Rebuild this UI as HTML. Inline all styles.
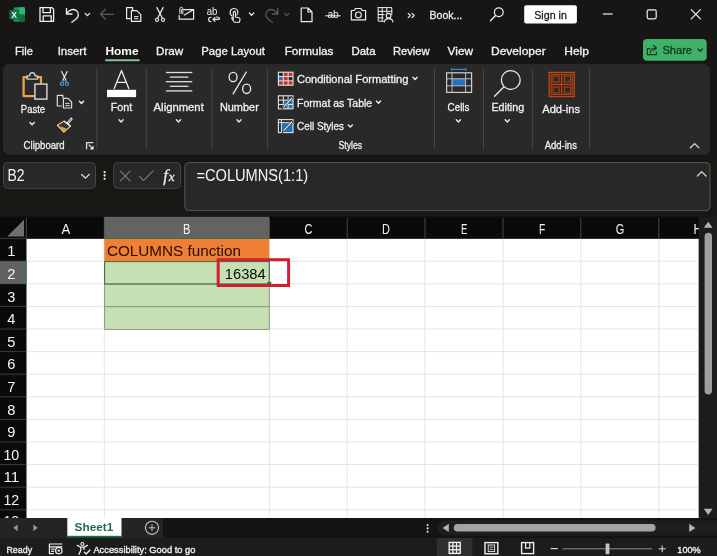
<!DOCTYPE html>
<html lang="en"><head><meta charset="utf-8"><title>Book1 - Excel</title>
<style>
html,body{margin:0;padding:0;background:#171614;overflow:hidden}
body{width:717px;height:556px;font-family:"Liberation Sans",sans-serif}
svg{display:block;will-change:transform}
text{font-family:"Liberation Sans",sans-serif;white-space:pre}
text.s{font-family:"Liberation Serif",serif;font-style:italic}
</style></head><body>
<svg width="717" height="556" viewBox="0 0 717 556">
<rect x="0.00" y="0.00" width="717.00" height="556.00" fill="#171614" />
<rect x="3.00" y="63.80" width="707.00" height="91.00" fill="#292929" rx="6.5" />
<rect x="0.00" y="156.00" width="717.00" height="61.00" fill="#191713" />
<g id="title-bar">
<rect x="13.50" y="7.20" width="11.50" height="14.60" fill="#1d8f57" rx="1.5" />
<rect x="19.20" y="7.20" width="5.80" height="7.30" fill="#2bb673" rx="1" />
<rect x="19.20" y="14.50" width="5.80" height="7.30" fill="#15693b" rx="1" />
<rect x="9.50" y="10.00" width="9.60" height="9.60" fill="#127341" rx="1.2" />
<text class="u" x="11.60" y="18.00" font-size="8.5" fill="#fff" font-weight="bold" textLength="5.40" lengthAdjust="spacingAndGlyphs" >X</text>
<path d="M40 7.6 h12 l1.6 1.6 v12.2 h-13.6 z M43 7.6 v5 h7.4 v-5 M43.2 21.4 v-5.6 h8 v5.6" fill="none" stroke="#f0f0f0" stroke-width="1.3" stroke-linecap="round" stroke-linejoin="round" />
<path d="M66.5 8.5 v5.5 h5.5 M66.8 13.8 c2-4 6.5-5.5 9.5-3.2 c3.2 2.6 2.4 6.6 -0.5 8.6 l-4 3" fill="none" stroke="#f0f0f0" stroke-width="1.3" stroke-linecap="round" stroke-linejoin="round" />
<polyline points="85.20,13.30 87.40,15.70 89.60,13.30" fill="none" stroke="#f0f0f0" stroke-width="1.2" stroke-linecap="round" stroke-linejoin="round"/>
<path d="M100.5 14.3 h13 M105.5 9.3 l-5 5 l5 5" fill="none" stroke="#5a5a5a" stroke-width="1.3" stroke-linecap="round" stroke-linejoin="round" />
<path d="M132.6 10 v-2.3 h-6 v11 h3.6" fill="none" stroke="#f0f0f0" stroke-width="1.2" stroke-linecap="round" stroke-linejoin="round" />
<path d="M131.4 10.6 h5.4 l4 4 v6.8 h-9.4 z" fill="none" stroke="#f0f0f0" stroke-width="1.2" stroke-linecap="round" stroke-linejoin="round" />
<path d="M134.4 16.6 h3.6 M134.4 18.7 h3.6" fill="none" stroke="#f0f0f0" stroke-width="1" stroke-linecap="round" stroke-linejoin="round" />
<path d="M156.9 7.6 l5.4 10.4 M163.1 7.6 l-5.4 10.4" fill="none" stroke="#f0f0f0" stroke-width="1.2" stroke-linecap="round" stroke-linejoin="round" />
<circle cx="157" cy="19.8" r="1.6" fill="none" stroke="#f0f0f0" stroke-width="1.1"/>
<circle cx="163" cy="19.8" r="1.6" fill="none" stroke="#f0f0f0" stroke-width="1.1"/>
<path d="M183.6 9.6 h10 v9.6 h-14.4 v-3.6 M184.4 15 l9-5.2" fill="none" stroke="#f0f0f0" stroke-width="1.2" stroke-linecap="round" stroke-linejoin="round" />
<path d="M179.8 13.6 v-4.8 a1.5 1.5 0 0 1 3 0 v5 M181.3 9.4 v4" fill="none" stroke="#f0f0f0" stroke-width="0.9" stroke-linecap="round" stroke-linejoin="round" />
<text class="u" x="206.80" y="15.40" font-size="10.2" fill="#f0f0f0" textLength="10.60" lengthAdjust="spacingAndGlyphs" >ab</text>
<path d="M211 17.2 c-3.2 0-3.2 4.4 0 4.4 M213 19.4 h6 M215 17.4 l-2 2 l2 2 M216.4 17 c2 0 3 0.6 3.2 1.6" fill="none" stroke="#f0f0f0" stroke-width="1.1" stroke-linecap="round" stroke-linejoin="round" />
<g transform="translate(-1.5,0)">
<path d="M233.5 16 c-3-2-2.5-7 1.8-7.5 c4-0.3 5.3 4 3 6.5" fill="none" stroke="#f0f0f0" stroke-width="1.1" stroke-linecap="round" stroke-linejoin="round" />
<path d="M234.8 19.5 v-7 a1.1 1.1 0 0 1 2.2 0 v4.5 l3.5 0.8 c1 0.3 1.2 1 1 2 l-0.6 2.5 h-5 l-2.6-3.6 c-0.5-1 0.8-1.5 1.5-0.6" fill="none" stroke="#f0f0f0" stroke-width="1.1" stroke-linecap="round" stroke-linejoin="round" />
</g>
<polyline points="249.40,13.00 251.60,15.40 253.80,13.00" fill="none" stroke="#f0f0f0" stroke-width="1.2" stroke-linecap="round" stroke-linejoin="round"/>
<g transform="translate(-1.3,0)">
<path d="M279 8.5 v5.5 h-5.5 M278.7 13.8 c-2-4-6.5-5.5-9.5-3.2 c-3.2 2.6-2.4 6.6 0.5 8.6 l4 3" fill="none" stroke="#5a5a5a" stroke-width="1.3" stroke-linecap="round" stroke-linejoin="round" />
</g>
<polyline points="284.50,13.30 286.70,15.70 288.90,13.30" fill="none" stroke="#5a5a5a" stroke-width="1.2" stroke-linecap="round" stroke-linejoin="round"/>
<path d="M301.2 8 h6.8 l4 4 v9.7 h-10.8 z M308 8 v4 h4" fill="none" stroke="#f0f0f0" stroke-width="1.2" stroke-linecap="round" stroke-linejoin="round" />
<text class="u" x="327.40" y="18.20" font-size="11.2" fill="#f0f0f0" textLength="11.40" lengthAdjust="spacingAndGlyphs" >ab</text>
<line x1="325.20" y1="15.80" x2="340.70" y2="15.80" stroke="#f0f0f0" stroke-width="1" />
<path d="M351.3 10.5 h3 l1.2-2 h5.5 l1.2 2 h3.4 v9.3 h-14.3 z" fill="none" stroke="#f0f0f0" stroke-width="1.2" stroke-linecap="round" stroke-linejoin="round" />
<circle cx="358.4" cy="14.9" r="2.9" fill="none" stroke="#f0f0f0" stroke-width="1.1"/>
<path d="M378.2 7.6 h13.6 v7 M378.2 7.6 v13.6 h5.5 M378.2 11.3 h13.6 M378.2 14.6 h6 M378.2 17.9 h5 M382.2 7.6 v13.6 M386.8 7.6 v5" fill="none" stroke="#f0f0f0" stroke-width="1" stroke-linecap="round" stroke-linejoin="round" />
<circle cx="388.6" cy="15.7" r="2.3" fill="none" stroke="#f0f0f0" stroke-width="1.1"/>
<path d="M384.4 22 c0.5-4.5 8-4.5 8.5 0" fill="none" stroke="#f0f0f0" stroke-width="1.1" stroke-linecap="round" stroke-linejoin="round" />
<path d="M408.2 13.3 l2.2 2.2 l-2.2 2.2 M412 13.3 l2.2 2.2 l-2.2 2.2" fill="none" stroke="#f0f0f0" stroke-width="1.2" stroke-linecap="round" stroke-linejoin="round" />
<text class="u" x="429.60" y="19.10" font-size="11.6" fill="#f0f0f0" textLength="32.70" lengthAdjust="spacingAndGlyphs" stroke="#f0f0f0" stroke-width="0.3" >Book...</text>
<circle cx="498.8" cy="12.2" r="4.4" fill="none" stroke="#f0f0f0" stroke-width="1.2"/>
<line x1="495.60" y1="15.50" x2="490.50" y2="20.80" stroke="#f0f0f0" stroke-width="1.3" stroke-linecap="round"/>
<rect x="524.20" y="5.20" width="52.70" height="18.40" fill="#ffffff" rx="2" />
<text class="u" x="534.20" y="18.90" font-size="11.6" fill="#1a1a1a" textLength="32.70" lengthAdjust="spacingAndGlyphs" stroke="#1a1a1a" stroke-width="0.3" >Sign in</text>
<line x1="602.90" y1="14.00" x2="612.60" y2="14.00" stroke="#f0f0f0" stroke-width="1.2" />
<rect x="647.20" y="9.80" width="9.00" height="9.00" fill="none" rx="1.5" stroke="#f0f0f0" stroke-width="1.2" />
<path d="M691.2 9.7 l9.2 9.2 M700.4 9.7 l-9.2 9.2" fill="none" stroke="#f0f0f0" stroke-width="1.2" stroke-linecap="round" stroke-linejoin="round" />
</g>
<g id="ribbon-tabs">
<text class="u" x="15.00" y="55.00" font-size="11.3" fill="#f4f4f4" textLength="18.00" lengthAdjust="spacingAndGlyphs" stroke="#f4f4f4" stroke-width="0.3" >File</text>
<text class="u" x="57.70" y="55.00" font-size="11.3" fill="#f4f4f4" textLength="28.70" lengthAdjust="spacingAndGlyphs" stroke="#f4f4f4" stroke-width="0.3" >Insert</text>
<text class="u" x="156.00" y="55.00" font-size="11.3" fill="#f4f4f4" textLength="27.30" lengthAdjust="spacingAndGlyphs" stroke="#f4f4f4" stroke-width="0.3" >Draw</text>
<text class="u" x="201.30" y="55.00" font-size="11.3" fill="#f4f4f4" textLength="63.70" lengthAdjust="spacingAndGlyphs" stroke="#f4f4f4" stroke-width="0.3" >Page Layout</text>
<text class="u" x="284.70" y="55.00" font-size="11.3" fill="#f4f4f4" textLength="48.70" lengthAdjust="spacingAndGlyphs" stroke="#f4f4f4" stroke-width="0.3" >Formulas</text>
<text class="u" x="351.50" y="55.00" font-size="11.3" fill="#f4f4f4" textLength="24.10" lengthAdjust="spacingAndGlyphs" stroke="#f4f4f4" stroke-width="0.3" >Data</text>
<text class="u" x="392.90" y="55.00" font-size="11.3" fill="#f4f4f4" textLength="36.80" lengthAdjust="spacingAndGlyphs" stroke="#f4f4f4" stroke-width="0.3" >Review</text>
<text class="u" x="447.60" y="55.00" font-size="11.3" fill="#f4f4f4" textLength="25.40" lengthAdjust="spacingAndGlyphs" stroke="#f4f4f4" stroke-width="0.3" >View</text>
<text class="u" x="491.00" y="55.00" font-size="11.3" fill="#f4f4f4" textLength="54.70" lengthAdjust="spacingAndGlyphs" stroke="#f4f4f4" stroke-width="0.3" >Developer</text>
<text class="u" x="564.20" y="55.00" font-size="11.3" fill="#f4f4f4" textLength="24.80" lengthAdjust="spacingAndGlyphs" stroke="#f4f4f4" stroke-width="0.3" >Help</text>
<text class="u" x="105.40" y="55.00" font-size="11.3" fill="#ffffff" font-weight="bold" textLength="33.20" lengthAdjust="spacingAndGlyphs" >Home</text>
<rect x="105.00" y="59.20" width="34.80" height="2.00" fill="#7fc3a2" rx="1" />
<rect x="643.00" y="39.00" width="63.70" height="21.80" fill="#40b167" rx="4" />
<text class="u" x="662.50" y="54.20" font-size="11.8" fill="#0c3a1f" textLength="29.50" lengthAdjust="spacingAndGlyphs" stroke="#0c3a1f" stroke-width="0.3" >Share</text>
<polyline points="698.10,49.00 700.20,51.20 702.30,49.00" fill="none" stroke="#0c3a1f" stroke-width="1.3" stroke-linecap="round" stroke-linejoin="round"/>
<path d="M650 48.6 h-2.6 v6 h9 v-2.6 M650.4 52.4 c0.4-3 2.4-4.4 5.4-4.4 M653.6 45.4 l2.8 2.6 l-2.8 2.6" fill="none" stroke="#0c3a1f" stroke-width="1.2" stroke-linecap="round" stroke-linejoin="round" />
</g>
<g id="ribbon">
<line x1="96.80" y1="68.50" x2="96.80" y2="149.20" stroke="#484848" stroke-width="1" />
<line x1="146.30" y1="68.50" x2="146.30" y2="149.20" stroke="#484848" stroke-width="1" />
<line x1="212.00" y1="68.50" x2="212.00" y2="149.20" stroke="#484848" stroke-width="1" />
<line x1="267.40" y1="68.50" x2="267.40" y2="149.20" stroke="#484848" stroke-width="1" />
<line x1="434.50" y1="68.50" x2="434.50" y2="149.20" stroke="#484848" stroke-width="1" />
<line x1="483.50" y1="68.50" x2="483.50" y2="149.20" stroke="#484848" stroke-width="1" />
<line x1="532.40" y1="68.50" x2="532.40" y2="149.20" stroke="#484848" stroke-width="1" />
<line x1="589.40" y1="68.50" x2="589.40" y2="149.20" stroke="#484848" stroke-width="1" />
<g transform="translate(0,0.7)">
<path d="M27 76.4 h-3.4 v19 h10.2 M37.6 76.4 h3.4 v5.6" fill="none" stroke="#e9a53f" stroke-width="2.3" stroke-linecap="round" stroke-linejoin="round" />
<path d="M27 78.4 v-3.2 h2.6 c0-4.2 5.4-4.2 5.4 0 h2.6 v3.2 z" fill="none" stroke="#cfcbc2" stroke-width="1.4" stroke-linecap="round" stroke-linejoin="round" />
<rect x="34.90" y="83.40" width="12.00" height="15.00" fill="#2b2b2b" stroke="#dcdcdc" stroke-width="1.4" />
</g>
<text class="u" x="20.80" y="113.40" font-size="11.1" fill="#f0f0f0" textLength="24.30" lengthAdjust="spacingAndGlyphs" stroke="#f0f0f0" stroke-width="0.3" >Paste</text>
<polyline points="30.00,122.50 32.10,124.70 34.20,122.50" fill="none" stroke="#ececec" stroke-width="1.4" stroke-linecap="round" stroke-linejoin="round"/>
<path d="M61.6 71.6 l4.4 8.6 M67.2 71.6 l-4.4 8.6" fill="none" stroke="#e8e8e8" stroke-width="1.2" stroke-linecap="round" stroke-linejoin="round" />
<circle cx="62" cy="83.7" r="1.6" fill="none" stroke="#4a95d6" stroke-width="1.2"/>
<circle cx="66.9" cy="83.7" r="1.6" fill="none" stroke="#4a95d6" stroke-width="1.2"/>
<path d="M63 81.9 l1.4-1.8 l1.4 1.8" fill="none" stroke="#4a95d6" stroke-width="1" stroke-linecap="round" stroke-linejoin="round" />
<path d="M62.9 97.6 v-2.2 h-5.6 v10.6 h4" fill="none" stroke="#dcdcdc" stroke-width="1.2" stroke-linecap="round" stroke-linejoin="round" />
<path d="M63.4 98.4 h4.6 l3.6 3.6 v6 h-8.2 z" fill="#2b2b2b" stroke="#dcdcdc" stroke-width="1.2" stroke-linecap="round" stroke-linejoin="round" />
<path d="M65.6 103.4 h3.8 M65.6 105.6 h3.8" fill="none" stroke="#dcdcdc" stroke-width="1" stroke-linecap="round" stroke-linejoin="round" />
<polyline points="79.40,101.30 81.50,103.50 83.60,101.30" fill="none" stroke="#ececec" stroke-width="1.4" stroke-linecap="round" stroke-linejoin="round"/>
<line x1="71.30" y1="119.00" x2="67.90" y2="123.00" stroke="#f0f0f0" stroke-width="2.6" stroke-linecap="round"/>
<line x1="71.10" y1="119.30" x2="68.30" y2="122.60" stroke="#2b2b2b" stroke-width="0.8" stroke-linecap="round"/>
<polygon points="63.9,121.1 70.6,126.2 63.9,132.2 57.4,125.3" fill="#3a3124" stroke="#ecdcb0" stroke-width="1.1" stroke-linejoin="round"/>
<polygon points="59.2,125.9 66.6,128.6 63.9,131.2" fill="#e9a53f"/>
<line x1="63.90" y1="121.10" x2="70.60" y2="126.20" stroke="#f0f0f0" stroke-width="1.2" />
<text class="u" x="23.60" y="149.10" font-size="11.1" fill="#f0f0f0" textLength="41.00" lengthAdjust="spacingAndGlyphs" stroke="#f0f0f0" stroke-width="0.3" >Clipboard</text>
<path d="M86.6 148.8 v-6.2 h6.2" fill="none" stroke="#e0e0e0" stroke-width="1.3" stroke-linecap="round" stroke-linejoin="round" />
<line x1="88.80" y1="144.80" x2="92.60" y2="148.60" stroke="#e0e0e0" stroke-width="1.3" />
<polygon points="93.6,145.6 93.6,149.6 89.6,149.6" fill="#e8e8e8"/>
<path d="M114.2 88.6 l7.3-18.2 l7.3 18.2 M116.8 82.4 h9.4" fill="none" stroke="#ececec" stroke-width="1.3" stroke-linecap="round" stroke-linejoin="round" />
<rect x="107.00" y="89.80" width="29.10" height="7.30" fill="#ffffff" />
<text class="u" x="110.80" y="110.60" font-size="11.1" fill="#f0f0f0" textLength="21.50" lengthAdjust="spacingAndGlyphs" stroke="#f0f0f0" stroke-width="0.3" >Font</text>
<polyline points="119.00,119.70 121.10,121.90 123.20,119.70" fill="none" stroke="#ececec" stroke-width="1.4" stroke-linecap="round" stroke-linejoin="round"/>
<line x1="165.90" y1="72.50" x2="192.30" y2="72.50" stroke="#e0e0e0" stroke-width="1.3" />
<line x1="169.80" y1="77.10" x2="188.40" y2="77.10" stroke="#e0e0e0" stroke-width="1.3" />
<line x1="165.90" y1="81.70" x2="192.30" y2="81.70" stroke="#e0e0e0" stroke-width="1.3" />
<line x1="169.80" y1="86.30" x2="188.40" y2="86.30" stroke="#e0e0e0" stroke-width="1.3" />
<line x1="165.90" y1="90.90" x2="192.30" y2="90.90" stroke="#e0e0e0" stroke-width="1.3" />
<text class="u" x="153.60" y="110.60" font-size="11.1" fill="#f0f0f0" textLength="50.20" lengthAdjust="spacingAndGlyphs" stroke="#f0f0f0" stroke-width="0.3" >Alignment</text>
<polyline points="176.40,119.70 178.50,121.90 180.60,119.70" fill="none" stroke="#ececec" stroke-width="1.4" stroke-linecap="round" stroke-linejoin="round"/>
<ellipse cx="233.1" cy="77" rx="4" ry="4.7" fill="none" stroke="#ececec" stroke-width="1.3"/>
<ellipse cx="246.6" cy="88.8" rx="4" ry="4.7" fill="none" stroke="#ececec" stroke-width="1.3"/>
<line x1="246.30" y1="72.00" x2="233.10" y2="93.80" stroke="#ececec" stroke-width="1.3" stroke-linecap="round"/>
<text class="u" x="219.90" y="110.60" font-size="11.1" fill="#f0f0f0" textLength="38.90" lengthAdjust="spacingAndGlyphs" stroke="#f0f0f0" stroke-width="0.3" >Number</text>
<polyline points="236.90,119.70 239.00,121.90 241.10,119.70" fill="none" stroke="#ececec" stroke-width="1.4" stroke-linecap="round" stroke-linejoin="round"/>
<rect x="283.27" y="72.20" width="4.87" height="4.33" fill="#c9302c" />
<rect x="288.13" y="72.20" width="4.87" height="4.33" fill="#c9302c" />
<rect x="278.40" y="76.53" width="4.87" height="4.33" fill="#2272c3" />
<rect x="283.27" y="76.53" width="4.87" height="4.33" fill="#c9302c" />
<rect x="278.40" y="80.87" width="4.87" height="4.33" fill="#c9302c" />
<rect x="283.27" y="80.87" width="4.87" height="4.33" fill="#c9302c" />
<rect x="288.13" y="80.87" width="4.87" height="4.33" fill="#c9302c" />
<rect x="278.40" y="72.20" width="14.60" height="13.00" fill="none" stroke="#e4e4e4" stroke-width="1.1" />
<line x1="283.27" y1="72.20" x2="283.27" y2="85.20" stroke="#e4e4e4" stroke-width="1" />
<line x1="278.40" y1="76.53" x2="293.00" y2="76.53" stroke="#e4e4e4" stroke-width="1" />
<line x1="288.13" y1="72.20" x2="288.13" y2="85.20" stroke="#e4e4e4" stroke-width="1" />
<line x1="278.40" y1="80.87" x2="293.00" y2="80.87" stroke="#e4e4e4" stroke-width="1" />
<text class="u" x="296.90" y="83.20" font-size="11.1" fill="#f0f0f0" textLength="111.40" lengthAdjust="spacingAndGlyphs" stroke="#f0f0f0" stroke-width="0.3" >Conditional Formatting</text>
<polyline points="413.00,77.20 415.10,79.40 417.20,77.20" fill="none" stroke="#ececec" stroke-width="1.4" stroke-linecap="round" stroke-linejoin="round"/>
<rect x="283.27" y="100.13" width="9.73" height="4.33" fill="#2272c3" />
<rect x="283.27" y="104.47" width="9.73" height="4.33" fill="#2272c3" />
<rect x="278.40" y="95.80" width="14.60" height="13.00" fill="none" stroke="#e4e4e4" stroke-width="1.1" />
<line x1="283.27" y1="95.80" x2="283.27" y2="108.80" stroke="#e4e4e4" stroke-width="1" />
<line x1="278.40" y1="100.13" x2="293.00" y2="100.13" stroke="#e4e4e4" stroke-width="1" />
<line x1="288.13" y1="95.80" x2="288.13" y2="108.80" stroke="#e4e4e4" stroke-width="1" />
<line x1="278.40" y1="104.47" x2="293.00" y2="104.47" stroke="#e4e4e4" stroke-width="1" />
<path d="M292.8 98.4 l-8.2 8.8 l-2.6 1.8 l1.2-3 l8.2-8.8 z" fill="#ececec" stroke="#2b2b2b" stroke-width="0.8" stroke-linecap="round" stroke-linejoin="round" />
<text class="u" x="297.10" y="107.00" font-size="11.1" fill="#f0f0f0" textLength="75.10" lengthAdjust="spacingAndGlyphs" stroke="#f0f0f0" stroke-width="0.3" >Format as Table</text>
<polyline points="376.40,101.10 378.50,103.30 380.60,101.10" fill="none" stroke="#ececec" stroke-width="1.4" stroke-linecap="round" stroke-linejoin="round"/>
<rect x="281.40" y="122.60" width="11.60" height="10.00" fill="#2272c3" />
<rect x="278.40" y="119.60" width="14.60" height="13.00" fill="none" stroke="#e4e4e4" stroke-width="1.1" />
<line x1="281.40" y1="119.60" x2="281.40" y2="132.60" stroke="#e4e4e4" stroke-width="1" />
<line x1="278.40" y1="122.60" x2="293.00" y2="122.60" stroke="#e4e4e4" stroke-width="1" />
<path d="M292.8 122.2 l-8.2 8.8 l-2.6 1.8 l1.2-3 l8.2-8.8 z" fill="#ececec" stroke="#2b2b2b" stroke-width="0.8" stroke-linecap="round" stroke-linejoin="round" />
<text class="u" x="297.00" y="130.40" font-size="11.1" fill="#f0f0f0" textLength="47.00" lengthAdjust="spacingAndGlyphs" stroke="#f0f0f0" stroke-width="0.3" >Cell Styles</text>
<polyline points="348.20,124.90 350.30,127.10 352.40,124.90" fill="none" stroke="#ececec" stroke-width="1.4" stroke-linecap="round" stroke-linejoin="round"/>
<text class="u" x="338.50" y="149.10" font-size="11.1" fill="#f0f0f0" textLength="23.60" lengthAdjust="spacingAndGlyphs" stroke="#f0f0f0" stroke-width="0.3" >Styles</text>
<line x1="451.50" y1="69.40" x2="466.00" y2="69.40" stroke="#3b8de0" stroke-width="1.1" />
<line x1="451.50" y1="68.00" x2="451.50" y2="70.80" stroke="#3b8de0" stroke-width="1" />
<line x1="466.00" y1="68.00" x2="466.00" y2="70.80" stroke="#3b8de0" stroke-width="1" />
<rect x="451.60" y="78.60" width="14.20" height="7.00" fill="#2272c3" />
<rect x="446.60" y="72.80" width="25.00" height="19.60" fill="none" stroke="#cfcfcf" stroke-width="1.2" />
<line x1="446.60" y1="78.80" x2="471.60" y2="78.80" stroke="#bdbdbd" stroke-width="1" />
<line x1="446.60" y1="85.80" x2="471.60" y2="85.80" stroke="#bdbdbd" stroke-width="1" />
<line x1="452.00" y1="72.80" x2="452.00" y2="92.40" stroke="#bdbdbd" stroke-width="1" />
<line x1="465.60" y1="72.80" x2="465.60" y2="92.40" stroke="#bdbdbd" stroke-width="1" />
<text class="u" x="447.60" y="110.60" font-size="11.1" fill="#f0f0f0" textLength="21.80" lengthAdjust="spacingAndGlyphs" stroke="#f0f0f0" stroke-width="0.3" >Cells</text>
<polyline points="456.30,119.70 458.40,121.90 460.50,119.70" fill="none" stroke="#ececec" stroke-width="1.4" stroke-linecap="round" stroke-linejoin="round"/>
<circle cx="510.8" cy="80" r="9.4" fill="none" stroke="#e8e8e8" stroke-width="1.3"/>
<line x1="504.00" y1="86.80" x2="494.60" y2="96.20" stroke="#e8e8e8" stroke-width="1.4" stroke-linecap="round"/>
<text class="u" x="491.50" y="110.60" font-size="11.1" fill="#f0f0f0" textLength="32.60" lengthAdjust="spacingAndGlyphs" stroke="#f0f0f0" stroke-width="0.3" >Editing</text>
<polyline points="505.20,119.70 507.30,121.90 509.40,119.70" fill="none" stroke="#ececec" stroke-width="1.4" stroke-linecap="round" stroke-linejoin="round"/>
<rect x="549.20" y="72.40" width="25.00" height="24.20" fill="#4c1f10" stroke="#b84a1f" stroke-width="1.3" />
<rect x="551.20" y="74.40" width="21.00" height="20.20" fill="none" stroke="#b84a1f" stroke-width="0.9" />
<line x1="561.70" y1="74.40" x2="561.70" y2="94.60" stroke="#b84a1f" stroke-width="1.1" />
<line x1="551.20" y1="84.40" x2="572.20" y2="84.40" stroke="#b84a1f" stroke-width="1.1" />
<rect x="553.00" y="76.00" width="6.20" height="6.00" fill="#2b2a2d" stroke="#b84a1f" stroke-width="0.9" />
<rect x="564.40" y="76.00" width="6.20" height="6.00" fill="#2b2a2d" stroke="#b84a1f" stroke-width="0.9" />
<rect x="553.00" y="87.00" width="6.20" height="6.00" fill="#2b2a2d" stroke="#b84a1f" stroke-width="0.9" />
<rect x="564.40" y="87.00" width="6.20" height="6.00" fill="#2b2a2d" stroke="#b84a1f" stroke-width="0.9" />
<text class="u" x="542.20" y="112.60" font-size="11.2" fill="#f0f0f0" textLength="37.90" lengthAdjust="spacingAndGlyphs" stroke="#f0f0f0" stroke-width="0.3" >Add-ins</text>
<text class="u" x="544.70" y="149.10" font-size="11.1" fill="#f0f0f0" textLength="32.20" lengthAdjust="spacingAndGlyphs" stroke="#f0f0f0" stroke-width="0.3" >Add-ins</text>
<polyline points="690.4,147.8 694.6,143.6 698.8,147.8" fill="none" stroke="#d8d8d8" stroke-width="1.3" stroke-linecap="round" stroke-linejoin="round"/>
</g>
<g id="formula-bar">
<rect x="3.50" y="162.60" width="92.00" height="25.80" fill="#282828" rx="4" stroke="#444444" stroke-width="1" />
<text class="u" x="7.60" y="181.10" font-size="15.6" fill="#f4f4f4" textLength="17.00" lengthAdjust="spacingAndGlyphs" >B2</text>
<polyline points="81.60,174.50 85.40,178.10 89.20,174.50" fill="none" stroke="#e0e0e0" stroke-width="1.3" stroke-linecap="round" stroke-linejoin="round"/>
<circle cx="104.6" cy="172.2" r="1.15" fill="#ececec"/>
<circle cx="104.6" cy="175.5" r="1.15" fill="#ececec"/>
<circle cx="104.6" cy="178.8" r="1.15" fill="#ececec"/>
<rect x="113.60" y="162.60" width="67.00" height="25.80" fill="#282828" rx="4" stroke="#444444" stroke-width="1" />
<path d="M120.4 171.2 l9.6 9.6 M130 171.2 l-9.6 9.6" fill="none" stroke="#7a7a7a" stroke-width="1.2" stroke-linecap="round" stroke-linejoin="round" />
<path d="M139.6 176.4 l4 4 l9.6-9.6" fill="none" stroke="#7a7a7a" stroke-width="1.2" stroke-linecap="round" stroke-linejoin="round" />
<text class="s" x="163.2" y="180.8" font-size="16.5" fill="#ececec" stroke="#ececec" stroke-width="0.3" letter-spacing="0.9">f<tspan font-size="13" dy="0.2">x</tspan></text>
<rect x="184.80" y="162.60" width="525.20" height="48.00" fill="#282828" rx="4" stroke="#565656" stroke-width="1" />
<text class="u" x="196.40" y="181.20" font-size="16" fill="#f4f4f4" textLength="111.80" lengthAdjust="spacingAndGlyphs" >=COLUMNS(1:1)</text>
<polyline points="697.4,176 701.7,171.6 706,176" fill="none" stroke="#d8d8d8" stroke-width="1.3" stroke-linecap="round" stroke-linejoin="round"/>
</g>
<g id="sheet-grid">
<rect x="26.30" y="238.60" width="672.50" height="279.40" fill="#ffffff" />
<line x1="104.30" y1="238.60" x2="104.30" y2="518.00" stroke="#e4e4e4" stroke-width="1" />
<line x1="269.30" y1="238.60" x2="269.30" y2="518.00" stroke="#e4e4e4" stroke-width="1" />
<line x1="347.20" y1="238.60" x2="347.20" y2="518.00" stroke="#e4e4e4" stroke-width="1" />
<line x1="425.00" y1="238.60" x2="425.00" y2="518.00" stroke="#e4e4e4" stroke-width="1" />
<line x1="503.00" y1="238.60" x2="503.00" y2="518.00" stroke="#e4e4e4" stroke-width="1" />
<line x1="580.80" y1="238.60" x2="580.80" y2="518.00" stroke="#e4e4e4" stroke-width="1" />
<line x1="658.80" y1="238.60" x2="658.80" y2="518.00" stroke="#e4e4e4" stroke-width="1" />
<line x1="26.30" y1="261.20" x2="698.80" y2="261.20" stroke="#e4e4e4" stroke-width="1" />
<line x1="26.30" y1="283.80" x2="698.80" y2="283.80" stroke="#e4e4e4" stroke-width="1" />
<line x1="26.30" y1="306.40" x2="698.80" y2="306.40" stroke="#e4e4e4" stroke-width="1" />
<line x1="26.30" y1="329.00" x2="698.80" y2="329.00" stroke="#e4e4e4" stroke-width="1" />
<line x1="26.30" y1="351.60" x2="698.80" y2="351.60" stroke="#e4e4e4" stroke-width="1" />
<line x1="26.30" y1="374.20" x2="698.80" y2="374.20" stroke="#e4e4e4" stroke-width="1" />
<line x1="26.30" y1="396.80" x2="698.80" y2="396.80" stroke="#e4e4e4" stroke-width="1" />
<line x1="26.30" y1="419.40" x2="698.80" y2="419.40" stroke="#e4e4e4" stroke-width="1" />
<line x1="26.30" y1="442.00" x2="698.80" y2="442.00" stroke="#e4e4e4" stroke-width="1" />
<line x1="26.30" y1="464.60" x2="698.80" y2="464.60" stroke="#e4e4e4" stroke-width="1" />
<line x1="26.30" y1="487.20" x2="698.80" y2="487.20" stroke="#e4e4e4" stroke-width="1" />
<line x1="26.30" y1="509.80" x2="698.80" y2="509.80" stroke="#e4e4e4" stroke-width="1" />
<rect x="0.00" y="216.80" width="698.80" height="21.80" fill="#0a0a0a" />
<rect x="0.00" y="238.60" width="26.30" height="279.40" fill="#0a0a0a" />
<line x1="26.30" y1="217.80" x2="26.30" y2="238.60" stroke="#464646" stroke-width="1" />
<line x1="104.30" y1="217.80" x2="104.30" y2="238.60" stroke="#464646" stroke-width="1" />
<line x1="269.30" y1="217.80" x2="269.30" y2="238.60" stroke="#464646" stroke-width="1" />
<line x1="347.20" y1="217.80" x2="347.20" y2="238.60" stroke="#464646" stroke-width="1" />
<line x1="425.00" y1="217.80" x2="425.00" y2="238.60" stroke="#464646" stroke-width="1" />
<line x1="503.00" y1="217.80" x2="503.00" y2="238.60" stroke="#464646" stroke-width="1" />
<line x1="580.80" y1="217.80" x2="580.80" y2="238.60" stroke="#464646" stroke-width="1" />
<line x1="658.80" y1="217.80" x2="658.80" y2="238.60" stroke="#464646" stroke-width="1" />
<line x1="0.00" y1="238.60" x2="26.30" y2="238.60" stroke="#3a3a3a" stroke-width="1" />
<line x1="0.00" y1="261.20" x2="26.30" y2="261.20" stroke="#3a3a3a" stroke-width="1" />
<line x1="0.00" y1="283.80" x2="26.30" y2="283.80" stroke="#3a3a3a" stroke-width="1" />
<line x1="0.00" y1="306.40" x2="26.30" y2="306.40" stroke="#3a3a3a" stroke-width="1" />
<line x1="0.00" y1="329.00" x2="26.30" y2="329.00" stroke="#3a3a3a" stroke-width="1" />
<line x1="0.00" y1="351.60" x2="26.30" y2="351.60" stroke="#3a3a3a" stroke-width="1" />
<line x1="0.00" y1="374.20" x2="26.30" y2="374.20" stroke="#3a3a3a" stroke-width="1" />
<line x1="0.00" y1="396.80" x2="26.30" y2="396.80" stroke="#3a3a3a" stroke-width="1" />
<line x1="0.00" y1="419.40" x2="26.30" y2="419.40" stroke="#3a3a3a" stroke-width="1" />
<line x1="0.00" y1="442.00" x2="26.30" y2="442.00" stroke="#3a3a3a" stroke-width="1" />
<line x1="0.00" y1="464.60" x2="26.30" y2="464.60" stroke="#3a3a3a" stroke-width="1" />
<line x1="0.00" y1="487.20" x2="26.30" y2="487.20" stroke="#3a3a3a" stroke-width="1" />
<line x1="0.00" y1="509.80" x2="26.30" y2="509.80" stroke="#3a3a3a" stroke-width="1" />
<polygon points="7.2,236.6 24,236.6 24,219.8" fill="#707070"/>
<rect x="104.30" y="216.80" width="165.00" height="21.30" fill="#636363" />
<line x1="104.30" y1="238.00" x2="269.30" y2="238.00" stroke="#3c7a55" stroke-width="1.4" />
<rect x="0.00" y="261.20" width="26.30" height="22.60" fill="#626262" />
<line x1="25.80" y1="261.20" x2="25.80" y2="283.80" stroke="#3c7a55" stroke-width="1.4" />
<text class="u" x="61.50" y="234.00" font-size="15.4" fill="#f4f4f4" textLength="8.80" lengthAdjust="spacingAndGlyphs" >A</text>
<text class="u" x="183.00" y="234.00" font-size="15.4" fill="#f4f4f4" textLength="7.40" lengthAdjust="spacingAndGlyphs" >B</text>
<text class="u" x="304.45" y="234.00" font-size="15.4" fill="#f4f4f4" textLength="7.90" lengthAdjust="spacingAndGlyphs" >C</text>
<text class="u" x="382.05" y="234.00" font-size="15.4" fill="#f4f4f4" textLength="7.90" lengthAdjust="spacingAndGlyphs" >D</text>
<text class="u" x="461.00" y="234.00" font-size="15.4" fill="#f4f4f4" textLength="6.40" lengthAdjust="spacingAndGlyphs" >E</text>
<text class="u" x="539.10" y="234.00" font-size="15.4" fill="#f4f4f4" textLength="6.20" lengthAdjust="spacingAndGlyphs" >F</text>
<text class="u" x="615.70" y="234.00" font-size="15.4" fill="#f4f4f4" textLength="8.60" lengthAdjust="spacingAndGlyphs" >G</text>
<clipPath id="gc"><rect x="0" y="216.8" width="698.8" height="301.5"/></clipPath>
<g clip-path="url(#gc)">
<text class="u" x="693.60" y="234.00" font-size="15.4" fill="#f4f4f4" textLength="8.60" lengthAdjust="spacingAndGlyphs" >H</text>
<text class="u" x="11.20" y="256.30" font-size="14.6" fill="#f4f4f4" text-anchor="middle" >1</text>
<text class="u" x="11.20" y="278.90" font-size="14.6" fill="#f4f4f4" text-anchor="middle" >2</text>
<text class="u" x="11.20" y="301.50" font-size="14.6" fill="#f4f4f4" text-anchor="middle" >3</text>
<text class="u" x="11.20" y="324.10" font-size="14.6" fill="#f4f4f4" text-anchor="middle" >4</text>
<text class="u" x="11.20" y="346.70" font-size="14.6" fill="#f4f4f4" text-anchor="middle" >5</text>
<text class="u" x="11.20" y="369.30" font-size="14.6" fill="#f4f4f4" text-anchor="middle" >6</text>
<text class="u" x="11.20" y="391.90" font-size="14.6" fill="#f4f4f4" text-anchor="middle" >7</text>
<text class="u" x="11.20" y="414.50" font-size="14.6" fill="#f4f4f4" text-anchor="middle" >8</text>
<text class="u" x="11.20" y="437.10" font-size="14.6" fill="#f4f4f4" text-anchor="middle" >9</text>
<text class="u" x="3.40" y="459.70" font-size="14.6" fill="#f4f4f4" textLength="15.80" lengthAdjust="spacingAndGlyphs" >10</text>
<text class="u" x="3.40" y="482.30" font-size="14.6" fill="#f4f4f4" textLength="15.80" lengthAdjust="spacingAndGlyphs" >11</text>
<text class="u" x="3.40" y="504.90" font-size="14.6" fill="#f4f4f4" textLength="15.80" lengthAdjust="spacingAndGlyphs" >12</text>
<text class="u" x="3.40" y="526.30" font-size="14.6" fill="#f4f4f4" textLength="15.80" lengthAdjust="spacingAndGlyphs" >13</text>
</g>
<rect x="104.30" y="238.90" width="165.00" height="22.60" fill="#ee7f35" />
<rect x="104.30" y="261.20" width="165.00" height="22.60" fill="#c6e0b4" />
<rect x="104.30" y="283.80" width="165.00" height="22.60" fill="#c6e0b4" />
<rect x="104.30" y="306.40" width="165.00" height="22.60" fill="#c6e0b4" />
<rect x="104.60" y="261.60" width="164.70" height="67.80" fill="none" stroke="#7a957c" stroke-width="0.9" />
<line x1="104.30" y1="284.10" x2="269.30" y2="284.10" stroke="#7a957c" stroke-width="1" />
<line x1="104.30" y1="306.70" x2="269.30" y2="306.70" stroke="#7a957c" stroke-width="1" />
<rect x="104.60" y="261.60" width="164.70" height="22.40" fill="none" stroke="#3d6e4e" stroke-width="1" />
<rect x="266.90" y="281.60" width="4.40" height="4.40" fill="#2f6b47" stroke="#c6e0b4" stroke-width="0.6" />
<text class="u" x="106.90" y="256.30" font-size="15.2" fill="#2a0d00" textLength="134.10" lengthAdjust="spacingAndGlyphs" >COLUMNS function</text>
<text class="u" x="224.80" y="278.80" font-size="15.2" fill="#0a0a0a" textLength="40.90" lengthAdjust="spacingAndGlyphs" >16384</text>
<rect x="218.20" y="259.70" width="70.40" height="25.80" fill="none" stroke="#d0202c" stroke-width="3" />
<rect x="698.80" y="216.80" width="18.20" height="303.20" fill="#1c1c1c" />
<polygon points="703.8,227.7 712.6,227.7 708.2,221.8" fill="#b4b4b4"/>
<rect x="704.60" y="232.80" width="7.40" height="161.60" fill="#9e9e9e" rx="3.7" />
<polygon points="703.8,508.8 712.6,508.8 708.2,515" fill="#b4b4b4"/>
</g>
<g id="status-area">
<rect x="0.00" y="518.00" width="717.00" height="20.00" fill="#131411" />
<rect x="0.00" y="518.00" width="163.00" height="20.00" fill="#242424" />
<polygon points="17.6,524.4 17.6,531.2 13.4,527.8" fill="#9a9a9a"/>
<polygon points="33.4,524.4 33.4,531.2 37.6,527.8" fill="#9a9a9a"/>
<rect x="67.30" y="518.00" width="54.20" height="18.60" fill="#ffffff" />
<rect x="67.30" y="535.80" width="54.20" height="1.80" fill="#1e6b41" />
<text class="u" x="74.60" y="530.90" font-size="11.6" fill="#236b45" font-weight="bold" textLength="38.60" lengthAdjust="spacingAndGlyphs" >Sheet1</text>
<circle cx="152" cy="527.8" r="6.6" fill="none" stroke="#c4c4c4" stroke-width="1.1"/>
<line x1="148.80" y1="527.80" x2="155.20" y2="527.80" stroke="#b8b8b8" stroke-width="1.1" />
<line x1="152.00" y1="524.60" x2="152.00" y2="531.00" stroke="#b8b8b8" stroke-width="1.1" />
<rect x="437.60" y="520.40" width="300.00" height="15.00" fill="#1e1e1e" rx="7.5" />
<circle cx="427.6" cy="525.0" r="1.05" fill="#e0e0e0"/>
<circle cx="427.6" cy="528.4" r="1.05" fill="#e0e0e0"/>
<circle cx="427.6" cy="531.8" r="1.05" fill="#e0e0e0"/>
<polygon points="448.8,523.8 448.8,532 442.6,527.9" fill="#b4b4b4"/>
<rect x="453.80" y="523.90" width="201.80" height="7.60" fill="#a4a4a4" rx="3.8" />
<polygon points="689.2,523.8 689.2,532 695.4,527.9" fill="#b4b4b4"/>
<rect x="0.00" y="538.00" width="717.00" height="18.00" fill="#1c1c1c" />
<text class="u" x="6.40" y="552.70" font-size="9.8" fill="#f0f0f0" textLength="25.70" lengthAdjust="spacingAndGlyphs" stroke="#f0f0f0" stroke-width="0.35" >Ready</text>
<path d="M49.4 544 h12.6 M49.4 544 v9.6 h4 M49.4 546.8 h12.6 M51.6 549.2 h2.6 M51.6 551.4 h2" fill="none" stroke="#f0f0f0" stroke-width="1.2" stroke-linecap="round" stroke-linejoin="round" />
<circle cx="58.8" cy="550.6" r="3.2" fill="none" stroke="#f0f0f0" stroke-width="1.3"/>
<circle cx="58.8" cy="550.6" r="1.2" fill="#f0f0f0"/>
<circle cx="82.4" cy="544" r="1.5" fill="none" stroke="#f0f0f0" stroke-width="1.1"/>
<path d="M77.4 545.4 l3.4 1.8 h3.2 l3.4-1.8 M80.8 547.2 v3 l-1.8 4 M84 547.2 v2.2" fill="none" stroke="#f0f0f0" stroke-width="1.3" stroke-linecap="round" stroke-linejoin="round" />
<path d="M84.4 552.2 l1.8 1.8 l3.8-4" fill="none" stroke="#f0f0f0" stroke-width="1.3" stroke-linecap="round" stroke-linejoin="round" />
<text class="u" x="93.40" y="552.70" font-size="9.8" fill="#f0f0f0" textLength="102.10" lengthAdjust="spacingAndGlyphs" stroke="#f0f0f0" stroke-width="0.35" >Accessibility: Good to go</text>
<rect x="436.80" y="538.00" width="35.60" height="18.00" fill="#303030" />
<rect x="449.20" y="542.40" width="11.00" height="11.00" fill="none" stroke="#f0f0f0" stroke-width="1.4" />
<line x1="452.87" y1="542.40" x2="452.87" y2="553.40" stroke="#f0f0f0" stroke-width="1.3" />
<line x1="449.20" y1="546.07" x2="460.20" y2="546.07" stroke="#f0f0f0" stroke-width="1.3" />
<line x1="456.53" y1="542.40" x2="456.53" y2="553.40" stroke="#f0f0f0" stroke-width="1.3" />
<line x1="449.20" y1="549.73" x2="460.20" y2="549.73" stroke="#f0f0f0" stroke-width="1.3" />
<rect x="485.00" y="542.60" width="12.80" height="11.20" fill="none" stroke="#f0f0f0" stroke-width="1.4" />
<rect x="488.20" y="545.00" width="6.40" height="6.60" fill="none" stroke="#f0f0f0" stroke-width="0.9" />
<line x1="489.60" y1="547.20" x2="493.20" y2="547.20" stroke="#f0f0f0" stroke-width="0.8" />
<line x1="489.60" y1="549.40" x2="493.20" y2="549.40" stroke="#f0f0f0" stroke-width="0.8" />
<rect x="521.60" y="542.60" width="12.00" height="11.00" fill="none" stroke="#f0f0f0" stroke-width="1.4" />
<path d="M525.6 542.6 v5.6 h4.2 v-5.6" fill="none" stroke="#f0f0f0" stroke-width="1.2" stroke-linecap="round" stroke-linejoin="round" />
<line x1="550.60" y1="548.60" x2="557.80" y2="548.60" stroke="#d8d8d8" stroke-width="1.2" />
<line x1="562.60" y1="548.80" x2="652.20" y2="548.80" stroke="#8c8c8c" stroke-width="1" />
<rect x="605.60" y="543.40" width="3.80" height="10.80" fill="#c4c4c4" rx="0.8" />
<line x1="658.80" y1="548.80" x2="665.60" y2="548.80" stroke="#d0d0d0" stroke-width="1.1" />
<line x1="662.20" y1="545.40" x2="662.20" y2="552.20" stroke="#d0d0d0" stroke-width="1.1" />
<text class="u" x="677.30" y="552.70" font-size="9.8" fill="#f0f0f0" textLength="23.40" lengthAdjust="spacingAndGlyphs" stroke="#f0f0f0" stroke-width="0.35" >100%</text>
</g>
</svg>
</body></html>
